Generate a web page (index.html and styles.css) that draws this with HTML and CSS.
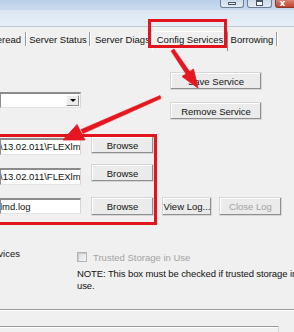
FILE: index.html
```html
<!DOCTYPE html>
<html>
<head>
<meta charset="utf-8">
<link rel="stylesheet" href="styles.css">
</head>
<body>
<div class="window">
  <div class="titlebar">
    <div class="winbtns">
      <span class="wb wb-min"><span class="glyph-min"></span></span>
      <span class="wb wb-max"><span class="glyph-max"></span></span>
      <span class="wb wb-close"><span class="glyph-x">x</span></span>
    </div>
  </div>
  <div class="frameband"></div>

  <div class="tabs">
    <div class="tab tab-cut"><span>Start/Stop/Reread</span></div>
    <div class="sep"></div>
    <div class="tab tab-status">Server Status</div>
    <div class="sep"></div>
    <div class="tab tab-diags">Server Diags</div>
    <div class="tab tab-selected">Config Services</div>
    <div class="tab tab-borrow">Borrowing</div>
    <div class="sep"></div>
  </div>

  <div class="page">
    <div class="top">
      <div class="leftcol">
        <div class="combo">
          <span class="combo-btn"><span class="tri"></span></span>
        </div>
      </div>
      <div class="rightcol">
        <div class="btn btn-save">Save Service</div>
        <div class="btn btn-remove">Remove Service</div>
      </div>
    </div>

    <div class="paths">
      <div class="prow prow1">
        <div class="field f1"><span>\13.02.011\FLEXlm\</span></div>
        <div class="btn btn-browse">Browse</div>
      </div>
      <div class="prow prow2">
        <div class="field f2"><span>\13.02.011\FLEXlm\</span></div>
        <div class="btn btn-browse">Browse</div>
      </div>
      <div class="prow prow3">
        <div class="field f3"><span>lmd.log</span></div>
        <div class="btn btn-browse">Browse</div>
        <div class="btn btn-view">View Log...</div>
        <div class="btn btn-close disabled">Close Log</div>
      </div>
    </div>

    <div class="options">
      <div class="optleft"><span>Use Services</span></div>
      <div class="optright">
        <div class="check-row">
          <span class="checkbox"></span>
          <span class="disabled-text">Trusted Storage in Use</span>
        </div>
        <div class="note">NOTE: This box must be checked if trusted storage in<br>use.</div>
      </div>
    </div>

    <div class="groupend"></div>
    <div class="nextbox"></div>
  </div>

  <div class="mark mark-tab"></div>
  <div class="mark mark-paths"></div>
  <svg class="arrows" width="294" height="332" viewBox="0 0 294 332">
    <g fill="#e5161f" stroke="#e5161f" stroke-linejoin="round">
      <polygon points="171,51 174,49 190,72 186,74" stroke-width="0.6"/>
      <polygon points="198,88 193.5,69 182,76.5" stroke-width="0.8"/>
      <polygon points="160,95.5 161,98.5 83,133.5 81,129.5" stroke-width="0.6"/>
      <polygon points="63,140 85,140 77,124.5" stroke-width="0.8"/>
    </g>
  </svg>
</div>
</body>
</html>
```
FILE: styles.css
```css
* { box-sizing: border-box; }
html, body {
  margin: 0;
  padding: 0;
}
body {
  width: 294px;
  height: 332px;
  overflow: hidden;
  background: #f0f0f0;
  font-family: "Liberation Sans", Arial, sans-serif;
  font-size: 9.5px;
  color: #111;
}
.window {
  position: relative;
  width: 294px;
  height: 332px;
  overflow: hidden;
}

/* title bar */
.titlebar {
  height: 10px;
  background: linear-gradient(#b9cfe8, #cbdcef);
  display: flex;
  justify-content: flex-end;
}
.winbtns {
  display: flex;
  gap: 3px;
  margin-right: -6px;
}
.wb {
  height: 8px;
  border: 1px solid #6e7f95;
  border-top: none;
  border-radius: 0 0 3px 3px;
  display: flex;
  justify-content: center;
  align-items: flex-end;
  background: linear-gradient(#cddbea, #e4ecf5);
}
.wb-min { width: 24px; }
.wb-max { width: 25px; }
.wb-close {
  width: 25px;
  background: linear-gradient(#d7816f, #c4432e);
  border-color: #8d3628;
}
.glyph-min {
  width: 8px;
  height: 3px;
  border: 1px solid #4a5565;
  background: #fff;
  margin-bottom: 2px;
}
.glyph-max {
  width: 7px;
  height: 6px;
  border: 1px solid #4a5565;
  border-top-width: 2px;
  background: #fff;
  margin-bottom: 1px;
}
.glyph-x {
  color: #fff;
  font-family: "DejaVu Sans", sans-serif;
  font-weight: bold;
  font-size: 9px;
  line-height: 8px;
  margin-left: -10px;
}
.frameband {
  height: 17px;
  background: linear-gradient(#dbe6f3, #e7eef7);
  border-bottom: 1px solid #b8c6d6;
}

/* tabs */
.tabs {
  height: 24px;
  display: flex;
  align-items: flex-start;
}
.tab {
  height: 24px;
  display: flex;
  align-items: center;
  justify-content: center;
  padding-top: 1px;
  white-space: nowrap;
  flex-shrink: 0;
}
.tab-cut {
  width: 25px;
  justify-content: flex-end;
  padding-right: 4px;
}
.tab-status { width: 62px; }
.tab-diags { width: 61px; justify-content: flex-start; padding-left: 4px; }
.tab-selected {
  width: 76px;
  height: 20px;
  margin-top: 4px;
  padding-top: 0;
  padding-bottom: 5px;
  border-top: 1px solid #fff;
  border-left: 1px solid #fff;
  border-right: 1px solid #8a8a8a;
}
.tab-borrow { width: 48px; }
.sep {
  width: 2px;
  height: 14px;
  margin-top: 5px;
  flex-shrink: 0;
  border-left: 1px solid #9a9a9a;
  border-right: 1px solid #fff;
}

/* page */
.top {
  display: flex;
  height: 69px;
}
.leftcol { width: 81px; flex-shrink: 0; }
.rightcol {
  margin-left: 89px;
  display: flex;
  flex-direction: column;
}
.combo {
  margin-top: 41px;
  height: 16px;
  width: 81px;
  background: #fff;
  border-top: 2px solid #8c8c8c;
  border-left: 1px solid #8c8c8c;
  border-bottom: 1px solid #e3e3e3;
  border-right: 1px solid #d8d8d8;
  display: flex;
  justify-content: flex-end;
  align-items: stretch;
  padding: 1px 1px 1px 0;
}
.combo-btn {
  width: 13px;
  background: #ececec;
  border-top: 1px solid #fff;
  border-left: 1px solid #fff;
  border-right: 1px solid #8a8a8a;
  border-bottom: 1px solid #8a8a8a;
  display: flex;
  align-items: center;
  justify-content: center;
}
.tri {
  width: 0;
  height: 0;
  border-left: 3px solid transparent;
  border-right: 3px solid transparent;
  border-top: 3px solid #000;
}

.btn {
  background: #ebebeb;
  border: 1px solid #d6d6d6;
  box-shadow: inset -1px -1px 0 #8f8f8f, inset 1px 1px 0 #fff;
  display: flex;
  align-items: center;
  justify-content: center;
  white-space: nowrap;
  color: #111;
  flex-shrink: 0;
}
.btn-save {
  width: 92px;
  height: 18px;
  margin-top: 21px;
}
.btn-remove {
  width: 92px;
  height: 18px;
  margin-top: 12px;
}

.paths {
  display: flex;
  flex-direction: column;
}
.prow {
  display: flex;
  align-items: flex-start;
}
.prow1 { margin-top: 16px; }
.prow2 { margin-top: 9px; }
.prow3 { margin-top: 12px; }
.field {
  width: 81px;
  height: 17px;
  flex-shrink: 0;
  background: #fff;
  border-top: 2px solid #8c8c8c;
  border-left: 1px solid #8c8c8c;
  border-bottom: 1px solid #e3e3e3;
  border-right: 1px solid #d8d8d8;
  overflow: hidden;
  white-space: nowrap;
  display: flex;
  align-items: center;
  padding-bottom: 1px;
}
.field span { margin-left: -1px; }
.f1 { margin-top: 2px; }
.f2 { margin-top: 4px; }
.f3 { margin-top: 1px; height: 16px; }
.btn-browse {
  width: 63px;
  height: 18px;
  margin-left: 10px;
}
.prow3 .btn { height: 19px; }
.btn-view {
  width: 50px;
  margin-left: 8px;
}
.btn-close {
  width: 63px;
  margin-left: 7px;
}
.disabled, .disabled-text { color: #a3a3a3; }

.options {
  display: flex;
  margin-top: 32px;
}
.optleft {
  width: 77px;
  flex-shrink: 0;
  display: flex;
}
.optleft span {
  width: 20px;
  display: flex;
  justify-content: flex-end;
  white-space: nowrap;
  line-height: 12px;
}
.optright {
  padding-top: 3px;
  display: flex;
  flex-direction: column;
  flex-shrink: 0;
}
.check-row {
  display: flex;
  align-items: center;
  height: 12px;
  gap: 6px;
}
.checkbox {
  width: 10px;
  height: 10px;
  border: 1px solid #b4b4b4;
  background: linear-gradient(135deg, #dcdcdc, #f6f6f6);
  box-shadow: inset 1px 1px 0 #c8c8c8;
}
.note {
  margin-top: 5px;
  line-height: 12px;
  white-space: nowrap;
  letter-spacing: -0.1px;
}
.groupend {
  margin-top: 17px;
  height: 2px;
  border-top: 1px solid #9c9c9c;
  border-bottom: 1px solid #fff;
}
.nextbox {
  margin-top: 15px;
  width: 279px;
  height: 20px;
  border-top: 1px solid #9c9c9c;
  border-right: 1px solid #d4d4d4;
  box-shadow: inset 0 1px 0 #fff;
}

/* annotation overlays */
.mark {
  position: absolute;
  border: 3px solid #e3141d;
}
.mark-tab {
  left: 148px;
  top: 19px;
  width: 79px;
  height: 29px;
}
.mark-paths {
  left: -4px;
  top: 134px;
  width: 161px;
  height: 91px;
}
.arrows {
  position: absolute;
  left: 0;
  top: 0;
  pointer-events: none;
}
```
